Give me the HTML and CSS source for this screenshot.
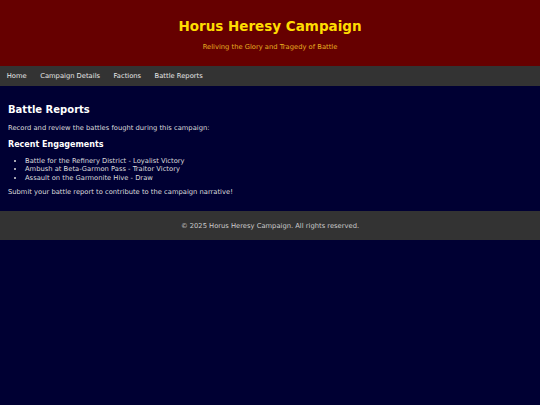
FILE: index.html
```html
<!DOCTYPE html>
<html lang="en">
<head>
<meta charset="utf-8">
<title>Horus Heresy Campaign</title>
<link rel="stylesheet" href="styles.css">
</head>
<body>
<header class="site-header">
  <h1 class="site-title">Horus Heresy Campaign</h1>
  <p class="site-tagline">Reliving the Glory and Tragedy of Battle</p>
</header>
<nav class="site-nav">
  <a href="#" class="nav-link">Home</a>
  <a href="#" class="nav-link">Campaign Details</a>
  <a href="#" class="nav-link">Factions</a>
  <a href="#" class="nav-link">Battle Reports</a>
</nav>
<main class="content">
  <h2 class="page-title">Battle Reports</h2>
  <p class="intro">Record and review the battles fought during this campaign:</p>
  <h3 class="section-title">Recent Engagements</h3>
  <ul class="battle-list">
    <li>Battle for the Refinery District - Loyalist Victory</li>
    <li>Ambush at Beta-Garmon Pass - Traitor Victory</li>
    <li>Assault on the Garmonite Hive - Draw</li>
  </ul>
  <p class="outro">Submit your battle report to contribute to the campaign narrative!</p>
</main>
<footer class="site-footer">
  <p class="copyright">&copy; 2025 Horus Heresy Campaign. All rights reserved.</p>
</footer>
</body>
</html>
```
FILE: styles.css
```css
html, body {
  margin: 0;
  padding: 0;
  background: #000033;
  font-family: "DejaVu Sans", Verdana, sans-serif;
  color: #dddddd;
}
.site-header {
  background: #660000;
  text-align: center;
  padding: 18px 0 15px;
}
.site-title {
  margin: 0;
  font-size: 13.5px;
  line-height: 16px;
  color: #ffdd00;
}
.site-tagline {
  margin: 9px 0 0;
  font-size: 6.75px;
  line-height: 8px;
  color: #e8b020;
}
.site-nav {
  background: #333333;
  height: 20px;
  box-sizing: border-box;
  padding-top: 1px;
  line-height: 19px;
  display: flex;
}
.nav-link {
  color: #e6e6e6;
  text-decoration: none;
  font-size: 6.75px;
  padding: 0 6.75px;
}
.content {
  padding: 11px 8px 14.5px;
}
.page-title {
  margin: 7px 0 0;
  font-size: 10px;
  line-height: 12px;
  color: #ffffff;
}
.intro, .outro {
  margin: 7.5px 0 0;
  font-size: 6.75px;
  line-height: 9px;
}
.section-title {
  margin: 7.5px 0 0;
  font-size: 8px;
  line-height: 10px;
  color: #ffffff;
}
.battle-list {
  margin: 6.5px 0 0;
  padding-left: 17px;
  font-size: 6.75px;
  line-height: 8.5px;
}
.outro {
  margin-top: 5.5px;
}
.site-footer {
  background: #333333;
  text-align: center;
  padding-top: 1px;
}
.copyright {
  margin: 0;
  font-size: 6.75px;
  line-height: 28px;
  color: #cccccc;
}
```
